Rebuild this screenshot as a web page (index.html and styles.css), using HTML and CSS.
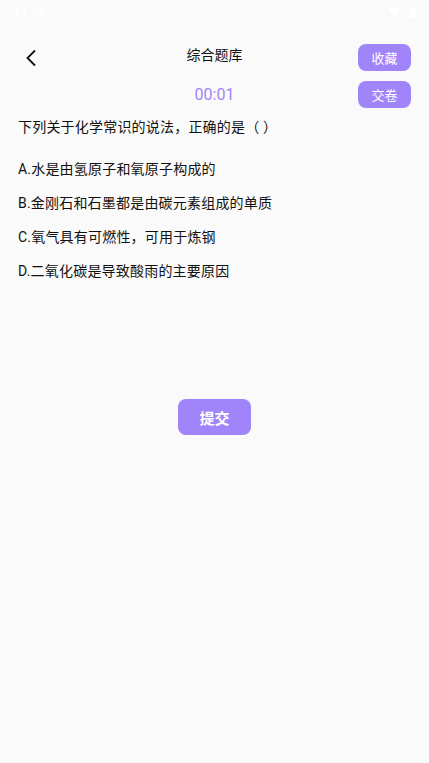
FILE: index.html
```html
<!DOCTYPE HTML>
<html>

<head>
  <title>综合题库</title>
  <meta charset="utf-8" />
  <link rel="stylesheet" href="styles.css">
</head>

<body>
<div class="status">
  <span class="time">11:02</span>
  <span class="icons">
    <svg width="13" height="11" viewBox="0 0 13 11"><path d="M0 2.5 Q6.5 -2.5 13 2.5 L6.5 10.5 Z" fill="#fff"/></svg>
    <svg width="7" height="11" viewBox="0 0 7 11"><rect x="0" y="1.5" width="7" height="9.5" fill="#fff"/><rect x="2" y="0" width="3" height="2" fill="#fff"/></svg>
  </span>
</div>

<div class="header">
  <a class="back" href="#">
    <svg width="12" height="18" viewBox="0 0 12 18"><path d="M10 1.5 L2.5 9 L10 16.5" fill="none" stroke="#111" stroke-width="1.8"/></svg>
  </a>
  <h1 class="title">综合题库</h1>
  <button class="btn small">收藏</button>
</div>

<div class="sub">
  <span class="timer">00:01</span>
  <button class="btn small">交卷</button>
</div>

<div class="question">
  <p class="stem">下列关于化学常识的说法，正确的是（ ）</p>
  <ul class="options">
    <li>A.水是由氢原子和氧原子构成的</li>
    <li>B.金刚石和石墨都是由碳元素组成的单质</li>
    <li>C.氧气具有可燃性，可用于炼钢</li>
    <li>D.二氧化碳是导致酸雨的主要原因</li>
  </ul>
</div>

<div class="submit-wrap">
  <button class="btn submit">提交</button>
</div>
</body>

</html>
```

FILE: styles.css
```css
* {
  margin: 0;
  padding: 0;
  box-sizing: border-box;
}

body {
  background-color: #fafafa;
  font-family: "Roboto", "Noto Sans CJK SC", sans-serif;
  color: #111;
  width: 429px;
  height: 763px;
  overflow: hidden;
}

.status {
  height: 24px;
  display: flex;
  align-items: center;
  justify-content: space-between;
  padding: 0 13px 0 13px;
}

.time {
  color: #fff;
  font-size: 13px;
  font-weight: 500;
}

.icons {
  display: flex;
  align-items: center;
  gap: 8px;
}

.header {
  margin-top: 20px;
  height: 27px;
  display: flex;
  align-items: center;
  justify-content: space-between;
  padding: 0 18px 0 25px;
  position: relative;
}

.back {
  display: flex;
}

.title {
  position: absolute;
  top: 1px;
  left: 0;
  right: 0;
  text-align: center;
  font-size: 14px;
  line-height: 20px;
  font-weight: normal;
  pointer-events: none;
}

.btn {
  border: none;
  background-color: #a084f9;
  color: #fff;
  font-family: "Roboto", "Noto Sans CJK SC", sans-serif;
  border-radius: 8px;
}

.btn.small {
  width: 53px;
  height: 27px;
  font-size: 13px;
}

.sub {
  margin-top: 10px;
  height: 27px;
  display: flex;
  align-items: center;
  justify-content: flex-end;
  padding-right: 18px;
  position: relative;
}

.timer {
  position: absolute;
  left: 0;
  right: 0;
  text-align: center;
  color: #a084f9;
  font-size: 16px;
}

.question {
  padding: 8px 18px 0;
  font-size: 14px;
  letter-spacing: 0.2px;
}

.stem {
  line-height: 22px;
}

.options {
  list-style: none;
  margin-top: 20px;
}

.options li {
  line-height: 22px;
  margin-bottom: 12px;
}

.submit-wrap {
  margin-top: 117px;
  display: flex;
  justify-content: center;
}

.btn.submit {
  width: 73px;
  height: 36px;
  font-size: 15px;
  font-weight: bold;
}
```
